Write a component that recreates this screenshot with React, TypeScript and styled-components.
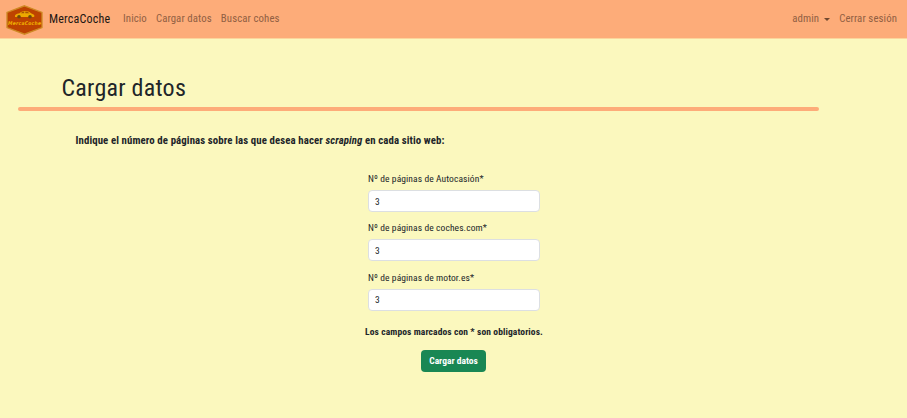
import React from 'react';
import styled, { createGlobalStyle } from 'styled-components';

const Global = createGlobalStyle`
  * { box-sizing: border-box; }
  body {
    margin: 0; background: #fbf8be; color: #212529;
    font-family: Roboto, "Open Sans", sans-serif; font-stretch: 75%; letter-spacing: .1px;
  }
`;
const Page = styled.div`
  min-height: 418px;
  background: #fbf8be;
`;
const Navbar = styled.nav`
  display: flex;
  align-items: center;
  height: 38px;
  padding: 0 10px 0 6px;
  background: #fdac79;
  box-shadow: 0 1px 0 #fcd59c;
  white-space: nowrap;
`;
const Brand = styled.a`
  display: flex;
  align-items: center;
  gap: 6px;
  width: 117px;
  font-size: 12px;
  letter-spacing: .2px;
  color: #1d1713;
`;
const Logo = styled.svg`
  width: 37px;
  height: 30px;
  margin-top: 2px;
`;
const Links = styled.div<{ $end?: boolean }>`
  display: flex;
  gap: 9px;
  margin-left: ${p => (p.$end ? 'auto' : 0)};
`;
const NavLink = styled.a`
  display: flex;
  align-items: center;
  font-size: 10.8px;
  line-height: 16px;
  color: #915f43;
`;
const Caret = styled.i`
  margin-left: 5px;
  border: 3.5px solid transparent;
  border-top-color: #71482f;
  border-bottom: 0;
`;
const Title = styled.h1`
  height: 35px;
  margin: 34px 0 0 61.500px;
  font-size: 24px;
  font-weight: 400;
  line-height: 33px;
  letter-spacing: .25px;
`;
const Rule = styled.hr`
  width: 801px;
  height: 4px;
  margin: 0 0 0 18px;
  border: 0;
  border-radius: 2px;
  background: #fdac79;
`;
const Prompt = styled.p`
  margin: 22px 0 0 75.500px;
  font-size: 10.8px;
  font-weight: 700;
  line-height: 16px;
  white-space: nowrap;
`;
const Form = styled.form`
  display: flex;
  flex-direction: column;
  align-items: center;
  width: 178px;
  margin: 22px auto 0 365px;
`;
const Field = styled.label`
  display: flex;
  flex-direction: column;
  width: 172px;
  height: 49.3px;
  font-size: 9.5px;
  line-height: 15px;
  white-space: nowrap;
`;
const Input = styled.input`
  width: 172px;
  height: 22px;
  margin-top: 4px;
  padding: 0 6px;
  border: 1px solid #dcdfe2;
  border-radius: 4px;
  outline: 0;
  background: #fff;
  color: #212529;
  font: inherit;
`;
const Required = styled.strong`
  margin-top: 5px;
  font-size: 9.5px;
  line-height: 16px;
  white-space: nowrap;
`;
const Submit = styled.button`
  width: 65px;
  height: 22px;
  margin: 10px 1px 0 0;
  padding: 0;
  border: 0;
  border-radius: 4px;
  background: #198754;
  color: #fff;
  font: inherit;
  font-size: 9.5px;
  font-weight: 700;
  white-space: nowrap;
`;

const fields = ['Nº de páginas de Autocasión*', 'Nº de páginas de coches.com*', 'Nº de páginas de motor.es*'];

export default function App() {
  return (
    <Page>
      <Global />
      <Navbar>
        <Brand>
          <Logo viewBox="0 0 37 30">
            <path d="M18.5.8 36 7.5v15L18.5 29.2 1 22.5v-15z" fill="#bd4300" stroke="#cf8a24" strokeWidth="1.3" />
            <path d="M9 12c-.5-2 1.200-3.200 4.500-3.700C15 5.500 22 4.800 25 8.200l2 1c1.500.6 1.800 2 1 2.800z" fill="#eda900" />
            <path d="M14.700 8.300q1.300-1.700 3.500-1.700v1.700zM19.300 6.600q2.700 0 4.200 1.700h-4.200z" fill="#a85505" />
            <circle cx="13" cy="11.8" r="1.8" fill="#70490c" />
            <circle cx="24" cy="11.8" r="1.8" fill="#70490c" />
            <text x="2" y="20" textLength="33" letterSpacing="0" fontFamily="DejaVu Sans" fontSize="5" fontWeight="700" fontStyle="italic" fill="#f0b000">MercaCoche</text>
          </Logo>
          <span>MercaCoche</span>
        </Brand>
        <Links>
          <NavLink>Inicio</NavLink>
          <NavLink>Cargar datos</NavLink>
          <NavLink>Buscar cohes</NavLink>
        </Links>
        <Links $end>
          <NavLink>admin <Caret /></NavLink>
          <NavLink>Cerrar sesión</NavLink>
        </Links>
      </Navbar>
      <Title>Cargar datos</Title>
      <Rule />
      <Prompt>Indique el número de páginas sobre las que desea hacer <em>scraping</em> en cada sitio web:</Prompt>
      <Form>
        {fields.map(label => (
          <Field key={label}>{label}<Input defaultValue="3" /></Field>
        ))}
        <Required>Los campos marcados con * son obligatorios.</Required>
        <Submit type="button">Cargar datos</Submit>
      </Form>
    </Page>
  );
}
